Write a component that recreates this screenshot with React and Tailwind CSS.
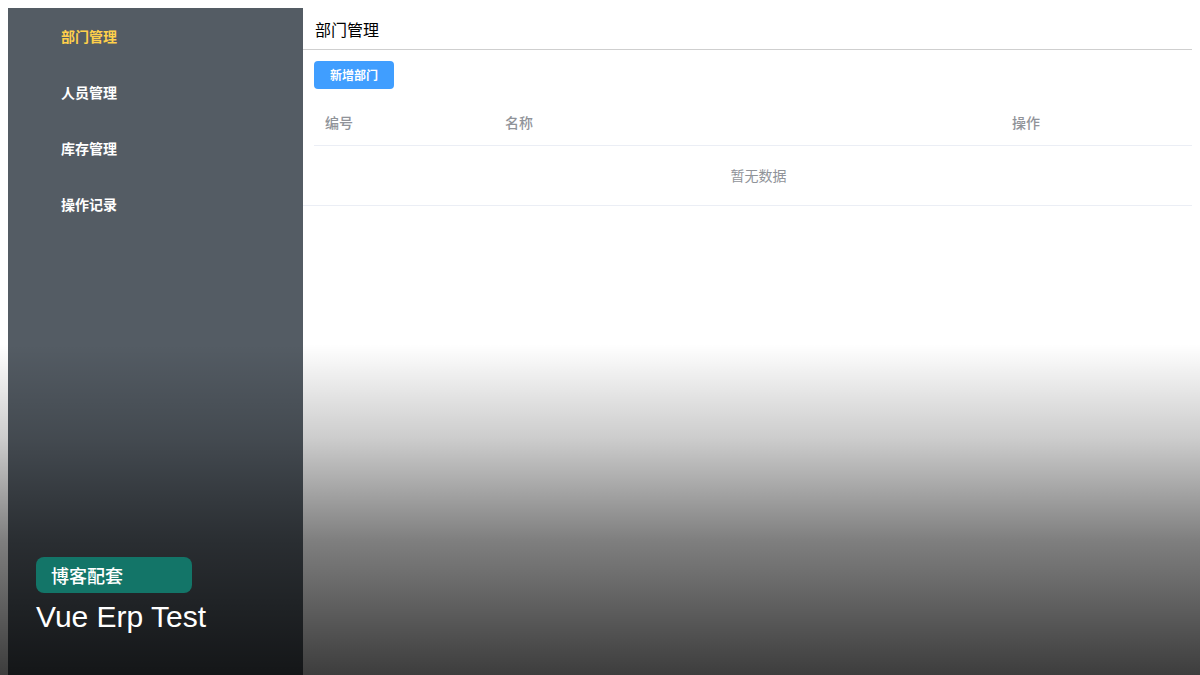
import React from 'react'

const menus = ['部门管理', '人员管理', '库存管理', '操作记录']

const cjk = { fontFamily: '"Noto Sans CJK SC", "Noto Sans", sans-serif' }

export default function App() {
  return (
    <div
      className="relative w-[1200px] h-[675px] overflow-hidden bg-white font-['Noto_Sans_CJK_SC',sans-serif]"
    >
      <div className="flex h-full pt-2 pl-2">
        {/* Sidebar */}
        <aside className="w-[295px] shrink-0 bg-[#545c64]">
          {menus.map((m, i) => (
            <div
              key={m}
              className={
                'h-14 flex items-center pl-[53px] pb-px text-sm font-semibold ' +
                (i === 0 ? 'text-[#ffd04b]' : 'text-white')
              }
            >
              {m}
            </div>
          ))}
        </aside>

        {/* Main */}
        <main className="flex-1 -mt-2 pt-2 pr-2">
          <div className="h-[42px] flex items-center pl-3 border-b border-[#cfcfcf] text-base text-black">
            部门管理
          </div>
          <div className="pl-[11px]">
            <button className="mt-[11px] h-7 w-20 rounded bg-[#409eff] text-white text-xs font-bold">
              新增部门
            </button>
            <div className="mt-[10px] grid grid-cols-[180px_507px_1fr] h-[47px] items-center border-b border-[#ebeef5] text-sm text-[#909399] font-medium">
              <div className="pl-[11px] pb-px">编号</div>
              <div className="pl-[11px] pb-px">名称</div>
              <div className="pl-[11px] pb-px">操作</div>
            </div>
          </div>
          <div className="h-[60px] flex items-center justify-center pl-[11px] border-b border-[#ebeef5] text-sm text-[#909399]">
            <span className="pl-[11px] pb-px">暂无数据</span>
          </div>
        </main>
      </div>

      {/* Cover overlay */}
      <div className="absolute inset-0 bg-[linear-gradient(to_bottom,rgba(0,0,0,0)_51%,rgba(0,0,0,0.2)_65%,rgba(0,0,0,0.5)_80%,rgba(0,0,0,0.76)_100%)]" />

      <div className="absolute left-9 top-[557px]" style={cjk}>
        <div className="w-[156px] h-9 rounded-lg bg-[#137568] flex items-center pl-[15px] text-lg font-medium text-white">
          博客配套
        </div>
        <div className="mt-[6px] text-[30px] leading-9 text-white font-['Liberation_Sans',Arial,sans-serif]">
          Vue Erp Test
        </div>
      </div>
    </div>
  )
}
